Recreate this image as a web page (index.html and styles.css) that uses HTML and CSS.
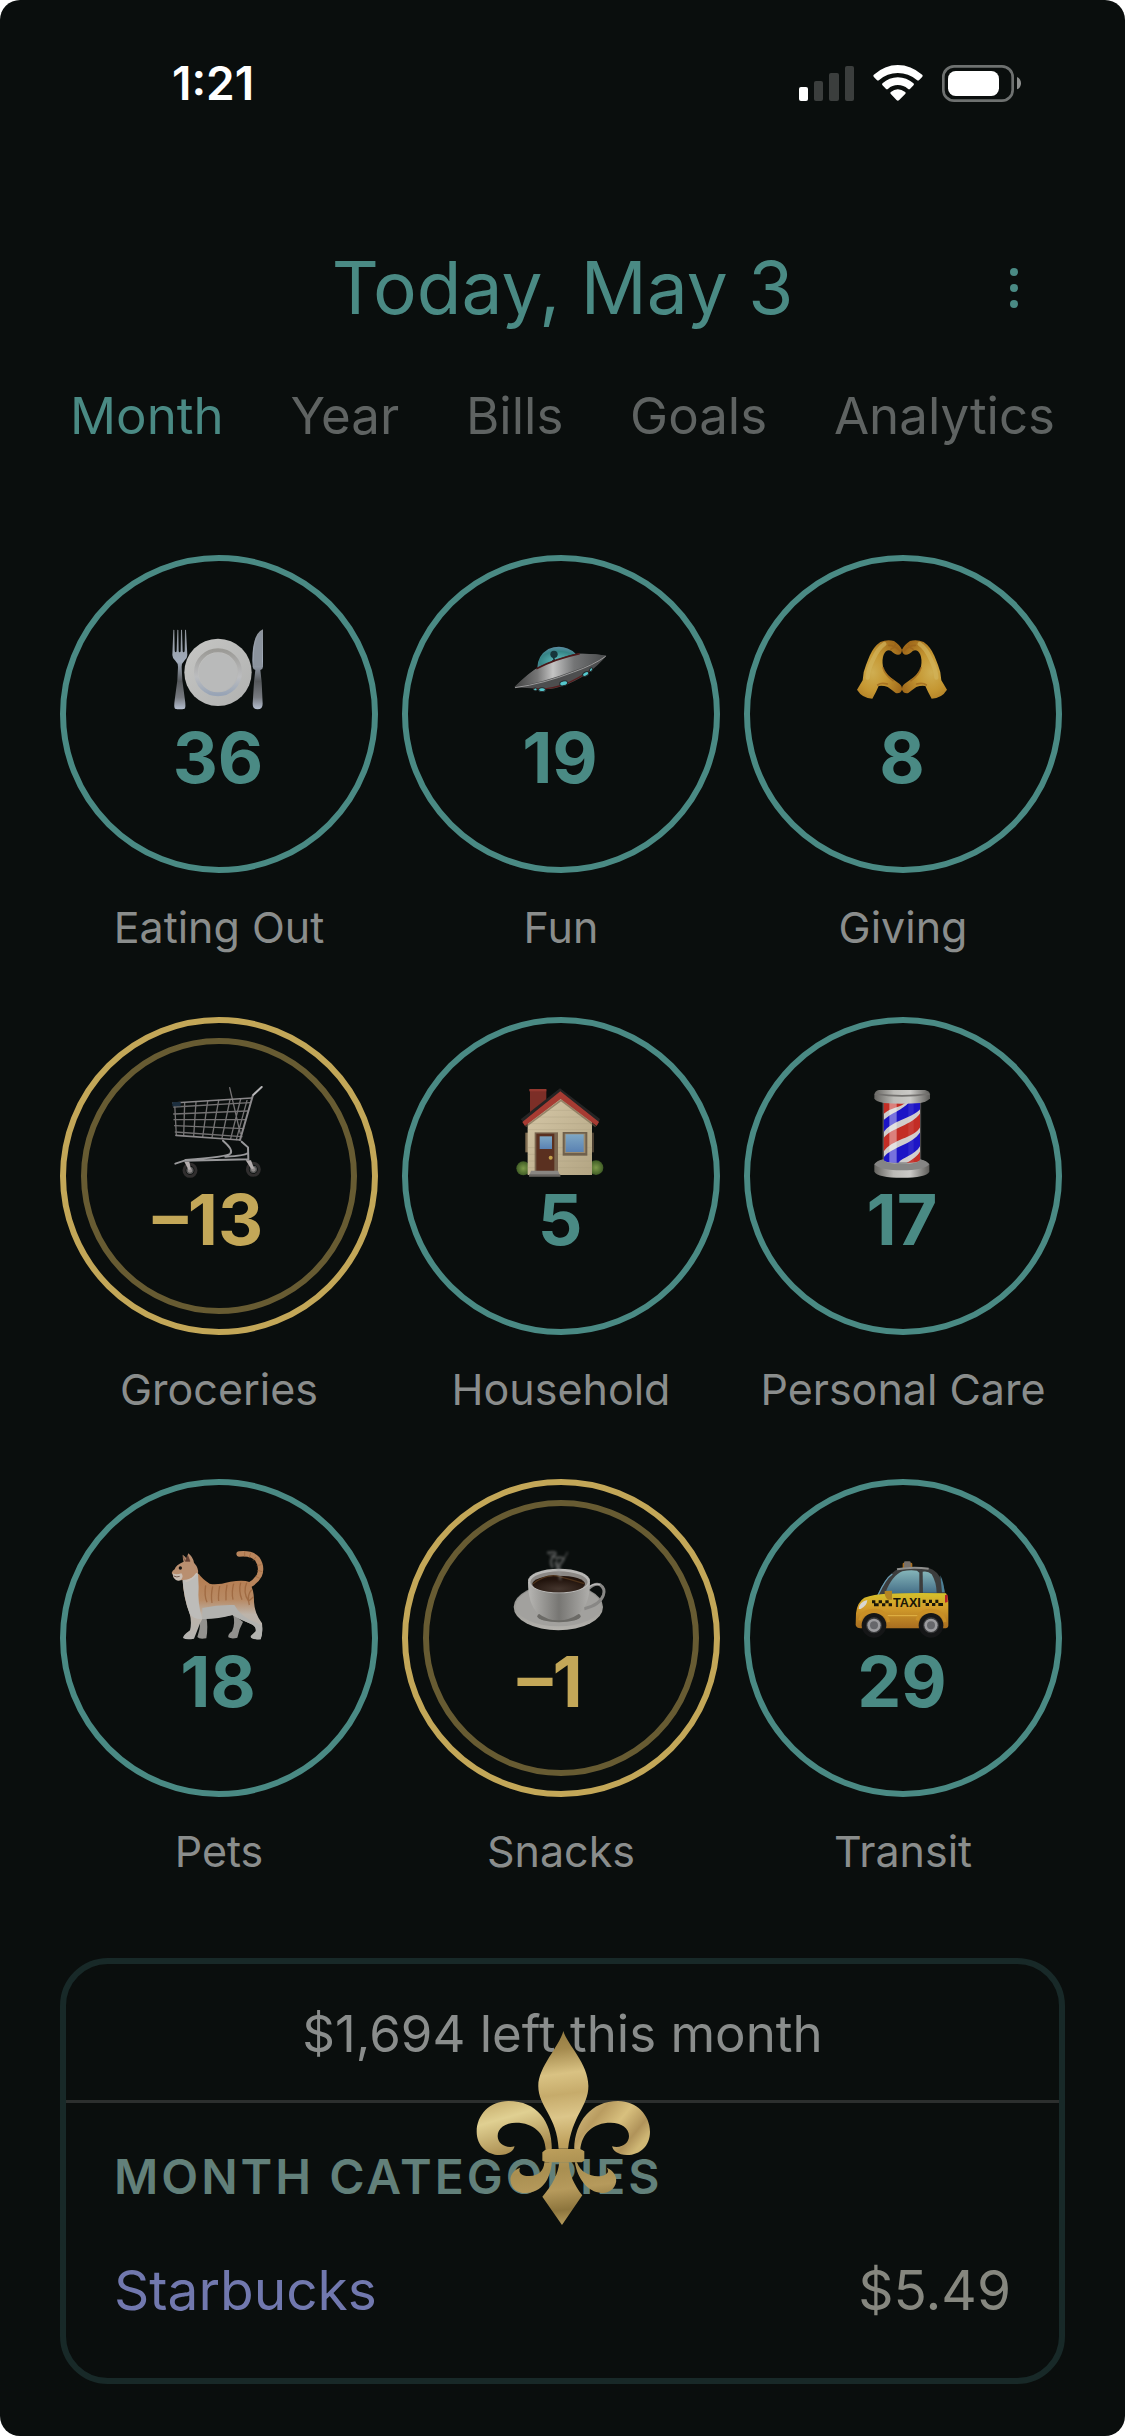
FILE: index.html
```html
<!DOCTYPE html>
<html lang="en">
  <head>
    <meta charset="utf-8" />
    <meta name="viewport" content="width=device-width, initial-scale=1" />
    <title>Budget</title>
    <link rel="stylesheet" href="styles.css">
  </head>
  <body>
    <div class="screen">
      <div class="status-bar">
        <span class="time">1:21</span>
        <div class="status-icons">
          <svg width="55" height="35" viewBox="0 0 55 35">
            <rect x="0" y="21" width="9" height="14" rx="2" fill="#fff" />
            <rect x="15" y="15" width="9" height="20" rx="2" fill="#3b3e3d" />
            <rect x="30" y="7" width="10" height="28" rx="2" fill="#3b3e3d" />
            <rect x="46" y="0" width="9" height="35" rx="2" fill="#3b3e3d" />
          </svg>
          <svg width="50" height="36" viewBox="339 72 149 108" fill="#fff">
            <path d="M341 101Q374 72 413 72T486 101Q489 104 486 108L477 117Q474 120 470 117Q445 96 413 96T357 117Q353 120 350 117L341 108Q338 104 341 101Z" />
            <path d="M367 127Q387 109 413 109T460 127Q463 130 460 133L450 143Q447 146 443 143Q430 132 413 132T384 143Q380 146 377 143L367 133Q364 130 367 127Z" />
            <path d="M392 153Q402 145 413 145T435 153Q438 156 435 159L417 177Q413 181 409 177L392 159Q389 156 392 153Z" />
          </svg>
          <svg width="79" height="37" viewBox="546 72 237 111">
            <rect x="550" y="76" width="208" height="103" rx="32" fill="none" stroke="#6e7170" stroke-width="8" />
            <rect x="564" y="90" width="153" height="75" rx="23" fill="#fff" />
            <path d="M771 108Q783 113 783 127T771 145Z" fill="#8c8e8d" />
          </svg>
        </div>
      </div>

      <header class="header">
        <h1>Today, May 3</h1>
        <button class="menu" aria-label="Menu">
          <svg width="12" height="44" viewBox="0 0 12 44">
            <circle cx="6" cy="6" r="4" />
            <circle cx="6" cy="22" r="4" />
            <circle cx="6" cy="38" r="4" />
          </svg>
        </button>
      </header>

      <nav class="tabs">
        <a href="#month" class="active">Month</a>
        <a href="#year">Year</a>
        <a href="#bills">Bills</a>
        <a href="#goals">Goals</a>
        <a href="#analytics">Analytics</a>
      </nav>

      <main>
        <div class="grid">
          <div class="category">
            <div class="ring">
              <svg class="icon" viewBox="359 245 288 288">
                <defs>
                  <linearGradient id="steel" x1="0" y1="0" x2="0" y2="1">
                    <stop offset="0" stop-color="#8d9299" />
                    <stop offset=".4" stop-color="#a2acbb" />
                    <stop offset=".65" stop-color="#55585b" />
                    <stop offset=".85" stop-color="#777a80" />
                    <stop offset="1" stop-color="#b5bfd0" />
                  </linearGradient>
                  <linearGradient id="plate" x1="0" y1="0" x2="1" y2="1">
                    <stop offset="0" stop-color="#c6c6c4" />
                    <stop offset="1" stop-color="#b0b1b0" />
                  </linearGradient>
                  <linearGradient id="rim" x1="0" y1="0" x2="0" y2="1">
                    <stop offset="0" stop-color="#9b9a96" />
                    <stop offset=".6" stop-color="#bcbdbf" />
                    <stop offset="1" stop-color="#98a4b6" />
                  </linearGradient>
                </defs>
                <path d="M369 269Q371 267 372 269L373 330Q373 336 376 336T379 330L381 269Q383 267 384 269L385 331Q385 336 388 336T391 331L392 269Q394 267 395 269L397 331Q397 336 400 336T403 330L404 269Q406 267 407 269L411 344Q411 354 402 361Q394 368 394 380L396 420L404 480Q407 500 403 505Q388 509 374 505Q370 500 373 480L381 420L383 380Q383 368 375 361Q366 354 366 344Z" fill="url(#steel)" />
                <circle cx="503" cy="396" r="101" fill="url(#plate)" />
                <circle cx="503" cy="396" r="66" fill="none" stroke="url(#rim)" stroke-width="12" />
                <circle cx="503" cy="396" r="58" fill="#b9baba" />
                <path d="M638 267Q606 280 606 360L607 380Q608 387 615 389L611 425L607 490Q607 507 622 507T637 490L634 425L630 389Q638 386 638 379Z" fill="url(#steel)" />
                <path d="M635 272Q609 290 609 378L635 378Z" fill="#8b939d" />
              </svg>
              <span class="amount">36</span>
            </div>
            <span class="label">Eating Out</span>
          </div>

          <div class="category">
            <div class="ring">
              <svg class="icon" viewBox="335 245 288 288">
                <defs>
                  <linearGradient id="hull" x1="0" y1="0" x2="1" y2="0">
                    <stop offset="0" stop-color="#3f4040" />
                    <stop offset=".25" stop-color="#777" />
                    <stop offset=".42" stop-color="#c4c4c4" />
                    <stop offset=".65" stop-color="#747576" />
                    <stop offset="1" stop-color="#47494a" />
                  </linearGradient>
                  <radialGradient id="dome" cx=".55" cy=".7" r=".8">
                    <stop offset="0" stop-color="#63c3c4" />
                    <stop offset=".6" stop-color="#368486" />
                    <stop offset="1" stop-color="#6c91b0" />
                  </radialGradient>
                </defs>
                <path d="M342 441Q390 396 410 384Q470 352 534 340Q585 339 618 346Q598 372 555 404Q480 450 430 446Z" fill="#4d4e4f" />
                <path d="M342 440Q390 394 410 384Q470 352 534 340Q585 339 618 346Q580 371 520 391Q430 426 342 440Z" fill="url(#hull)" />
                <path d="M344 442Q430 430 520 395Q580 374 616 348" fill="none" stroke="#9a9a9a" stroke-width="3" />
                <path d="M411 382Q412 345 444 326Q490 308 526 340Q465 356 411 382Z" fill="url(#dome)" />
                <circle cx="461" cy="342" r="11" fill="#17353b" />
                <path d="M459 350L462 360L456 362" stroke="#17353b" stroke-width="5" fill="none" />
                <path d="M408 385Q470 354 538 340" fill="none" stroke="#4c1718" stroke-width="5" />
                <path d="M398 444Q480 455 575 386" fill="none" stroke="#5a1d1e" stroke-width="4" />
                <g fill="#55c8cd" stroke="#232a2c" stroke-width="3">
                  <ellipse cx="425" cy="448" rx="10" ry="6" />
                  <ellipse cx="405" cy="447" rx="5" ry="4" />
                  <ellipse cx="490" cy="429" rx="12" ry="7" transform="rotate(-14 490 429)" />
                  <ellipse cx="556" cy="401" rx="10" ry="6" transform="rotate(-28 556 401)" />
                  <ellipse cx="572" cy="388" rx="4" ry="6" transform="rotate(30 572 388)" />
                </g>
              </svg>
              <span class="amount">19</span>
            </div>
            <span class="label">Fun</span>
          </div>

          <div class="category">
            <div class="ring">
              <svg class="icon" viewBox="341 245 288 288">
                <defs>
                  <radialGradient id="skin" cx=".35" cy=".55" r=".7">
                    <stop offset="0" stop-color="#cfae52" />
                    <stop offset=".45" stop-color="#c59732" />
                    <stop offset="1" stop-color="#a0691a" />
                  </radialGradient>
                  <g id="hand">
                    <path d="M350 448L367 420Q368 394 377 374Q383 358 388 346Q400 319 420 305Q440 297 461 302Q478 313 485 328Q484 343 473 343Q464 343 452 331Q438 326 430 343Q424 358 428 379Q434 397 450 411L477 430Q486 436 485 448Q480 461 466 458Q455 449 442 440Q428 435 415 437Q407 456 396 475Q366 474 350 448Z" fill="url(#skin)" />
                    <path d="M382 412Q384 384 399 356Q413 324 432 311" fill="none" stroke="#d2b45b" stroke-width="13" stroke-linecap="round" opacity=".7" />
                    <path d="M428 382Q434 403 458 421M412 434Q422 426 441 431M445 315Q464 315 478 331M452 327Q462 323 465 313" fill="none" stroke="#99611a" stroke-width="5" stroke-linecap="round" opacity=".65" />
                  </g>
                </defs>
                <use href="#hand" />
                <use href="#hand" transform="translate(970 0) scale(-1 1)" />
              </svg>
              <span class="amount">8</span>
            </div>
            <span class="label">Giving</span>
          </div>

          <div class="category">
            <div class="ring over">
              <svg class="icon" viewBox="359 251 288 288" fill="none" stroke-linecap="round">
                <g stroke="#747273" stroke-width="4">
                  <path d="M370 320L600 307M370 341L592 332M371 358L587 358M373 376L580 385M375 395L575 409" />
                  <path d="M373 310L378 405M403 307L400 406M437 305L430 408M472 303L457 410M505 300L485 412M538 262L570 400M539 298L515 413M571 296L541 415M590 300L558 418" />
                </g>
                <path d="M368 308L604 293M377 405L569 419" stroke="#8a888a" stroke-width="5" />
                <path d="M634 260L608 284L569 419" stroke="#8c8a8c" stroke-width="6" />
                <path d="M634 260L609 284" stroke="#b9b9bb" stroke-width="5" />
                <rect x="366" y="305" width="25" height="13" fill="#1c2e3e" />
                <path d="M518 421Q550 448 540 460Q530 470 405 479M574 424L593 441L594 477L402 481L375 490M592 458Q586 466 525 469" stroke="#99999b" stroke-width="6" />
                <circle cx="419" cy="510" r="18" stroke="#302e2e" stroke-width="9" />
                <circle cx="419" cy="510" r="9" fill="#8d8988" stroke="#555" stroke-width="4" />
                <circle cx="609" cy="507" r="18" stroke="#302e2e" stroke-width="9" />
                <circle cx="609" cy="507" r="9" fill="#8d8988" stroke="#555" stroke-width="4" />
                <path d="M402 484L417 484L422 507Q415 511 413 505ZM586 480L602 480L611 504Q604 509 601 503Z" fill="#b3adad" />
              </svg>
              <span class="amount">–13</span>
            </div>
            <span class="label">Groceries</span>
          </div>

          <div class="category">
            <div class="ring">
              <svg class="icon" viewBox="335 251 288 288">
                <defs>
                  <linearGradient id="wall" x1="0" y1="0" x2="1" y2="1">
                    <stop offset="0" stop-color="#d6c8a8" />
                    <stop offset="1" stop-color="#b3a583" />
                  </linearGradient>
                  <linearGradient id="glass" x1="0" y1="0" x2="0" y2="1">
                    <stop offset="0" stop-color="#7ea7c4" />
                    <stop offset="1" stop-color="#5a82b3" />
                  </linearGradient>
                  <radialGradient id="bush">
                    <stop offset="0" stop-color="#7d9a4a" />
                    <stop offset="1" stop-color="#3f5c25" />
                  </radialGradient>
                </defs>
                <rect x="389" y="267" width="49" height="80" fill="#7c2e27" />
                <rect x="387" y="266" width="51" height="7" fill="#93382f" />
                <circle cx="369" cy="504" r="21" fill="url(#bush)" />
                <circle cx="587" cy="502" r="22" fill="url(#bush)" />
                <rect x="375" y="397" width="9" height="59" fill="#806d51" />
                <rect x="572" y="397" width="9" height="59" fill="#4b3f31" />
                <path d="M382 524V362L480 289L575 362V524Z" fill="url(#wall)" />
                <path d="M400 350H560M382 370H575M382 388H575M382 442H575M382 462H575M382 482H575M382 502H575M430 330H530" stroke="#a89b7c" stroke-width="2" opacity=".5" />
                <path d="M361 357L479 264L599 356L592 372L480 289L372 368Z" fill="#252424" />
                <path d="M366 365L480 273L596 365L589 377L481 296L374 377Z" fill="#a63b32" />
                <path d="M376 379L482 300L586 379" fill="none" stroke="#6f5b45" stroke-width="5" opacity=".6" />
                <rect x="403" y="396" width="70" height="116" fill="#7a6650" />
                <rect x="408" y="400" width="54" height="112" fill="#5a3020" />
                <rect x="418" y="408" width="37" height="38" fill="url(#glass)" />
                <circle cx="451" cy="472" r="6" fill="#c3a04a" />
                <rect x="487" y="395" width="74" height="71" fill="#6f604c" />
                <rect x="493" y="400" width="62" height="58" fill="#9b8b6f" />
                <rect x="496" y="402" width="54" height="53" fill="url(#glass)" />
                <path d="M392 511H473L480 528H386Z" fill="#898682" />
                <path d="M386 522H480V529H386Z" fill="#66635f" />
              </svg>
              <span class="amount">5</span>
            </div>
            <span class="label">Household</span>
          </div>

          <div class="category">
            <div class="ring">
              <svg class="icon" viewBox="341 251 288 288">
                <defs>
                  <linearGradient id="cap" x1="0" y1="0" x2="1" y2="0">
                    <stop offset="0" stop-color="#64635f" />
                    <stop offset=".35" stop-color="#bcbbb7" />
                    <stop offset=".65" stop-color="#cbcac7" />
                    <stop offset="1" stop-color="#5d5c59" />
                  </linearGradient>
                  <clipPath id="tube"><path d="M429 305H540V487H429Z" /></clipPath>
                </defs>
                <g clip-path="url(#tube)">
                  <rect x="429" y="300" width="111" height="190" fill="#d0cdcc" />
                  <path d="M429 270V342C450 320 485 322 497 305Z" fill="#c32d25" />
                  <path d="M429 360C455 335 490 330 510 300H545V320C520 356 450 360 429 398Z" fill="#1d15c6" />
                  <path d="M429 414C455 380 515 376 540 338V380C520 415 455 415 429 455Z" fill="#c32d25" />
                  <path d="M429 472C455 438 515 435 540 395V436C520 470 480 468 470 495H429Z" fill="#1d15c6" />
                  <path d="M495 490C515 478 530 470 540 452V490Z" fill="#c32d25" />
                  <rect x="447" y="305" width="22" height="185" fill="#fff" opacity=".4" />
                  <rect x="504" y="305" width="16" height="185" fill="#fff" opacity=".08" />
                </g>
                <path d="M428 305V487M541 305V487" stroke="#504e4c" stroke-width="3" />
                <path d="M416 269H554Q568 272 569 282V294Q560 305 540 308Q485 313 430 308Q404 303 402 294V282Q404 271 416 269Z" fill="url(#cap)" />
                <path d="M404 281Q485 292 567 281" fill="none" stroke="#73716f" stroke-width="5" />
                <path d="M429 477Q432 489 485 489T540 477Q560 482 567 492V514Q557 532 485 532T402 514V492Q410 480 429 477Z" fill="url(#cap)" />
                <path d="M402 492Q420 510 485 510T567 492Q560 482 540 478Q535 490 485 490T429 478Q410 481 402 492Z" fill="#858584" />
              </svg>
              <span class="amount">17</span>
            </div>
            <span class="label">Personal Care</span>
          </div>

          <div class="category">
            <div class="ring">
              <svg class="icon" viewBox="359 227 288 288">
                <defs>
                  <linearGradient id="fur" x1="0" y1="0" x2="0" y2="1">
                    <stop offset="0" stop-color="#b57c4f" />
                    <stop offset=".4" stop-color="#b88a64" />
                    <stop offset=".62" stop-color="#bdb4aa" />
                    <stop offset="1" stop-color="#b4b3b0" />
                  </linearGradient>
                </defs>
                <path d="M441 425Q452 455 447 478L441 500Q447 508 468 504Q474 470 468 440ZM548 430Q556 460 545 483Q532 492 534 501Q545 507 561 502Q566 475 578 455Z" fill="#92918e" />
                <path d="M566 251Q605 247 621 266Q637 290 627 315Q618 333 597 344" fill="none" stroke="#b9855c" stroke-width="16" stroke-linecap="round" />
                <path d="M583 244V259M601 248L596 263M617 260L608 271M633 283L619 286M636 304L621 300M628 324L614 317" stroke="#9b6338" stroke-width="3" opacity=".6" />
                <path d="M397 330Q400 385 418 430Q425 455 419 480Q398 495 398 503Q408 510 431 505L444 472Q450 455 456 446Q505 442 546 434Q575 450 600 460Q620 468 616 483L601 497Q600 507 631 507Q638 487 635 459Q613 430 611 395Q612 360 597 335Q580 328 540 334Q500 345 478 340Q455 325 445 310Z" fill="url(#fur)" />
                <path d="M396 322Q400 385 418 430Q430 448 456 446Q441 400 445 350L443 305Z" fill="#bdbcb9" />
                <path d="M456 413Q505 402 552 404Q570 435 600 450Q630 462 635 468Q638 487 631 507Q606 509 601 500L616 485Q620 465 596 458Q566 447 546 434Q502 447 456 446Z" fill="#b2b2af" />
                <path d="M466 345Q461 375 470 396M487 348Q481 375 485 398M508 347Q503 376 505 392M530 343Q525 366 527 390M550 340Q543 366 548 388M571 337Q564 362 575 388M589 337Q577 365 594 391M604 358Q588 374 597 404M609 380L596 391" fill="none" stroke="#935c34" stroke-width="4" opacity=".65" />
                <path d="M397 253Q406 259 408 265L414 249Q428 260 431 277Q446 294 443 309Q424 330 396 329Q379 333 369 320Q367 310 364 308Q366 300 373 297Q376 284 400 274Q397 265 397 253Z" fill="#b98f70" />
                <path d="M367 309Q378 315 393 309Q402 320 390 330Q377 334 369 320Z" fill="#c9bdb3" />
                <path d="M412 255L419 273L405 273ZM399 258L403 271" fill="#654133" stroke="#654133" stroke-width="2" />
                <circle cx="390" cy="293" r="5" fill="#171311" />
                <path d="M370 317Q380 322 388 318" fill="none" stroke="#71594d" stroke-width="3" />
                <path d="M405 333Q425 330 440 309" fill="none" stroke="#c9c1b9" stroke-width="5" />
              </svg>
              <span class="amount">18</span>
            </div>
            <span class="label">Pets</span>
          </div>

          <div class="category">
            <div class="ring over">
              <svg class="icon" viewBox="335 227 288 288">
                <defs>
                  <linearGradient id="cup" x1="0" y1="0" x2="1" y2="0">
                    <stop offset="0" stop-color="#b7b6b3" />
                    <stop offset=".5" stop-color="#777673" />
                    <stop offset="1" stop-color="#b0afac" />
                  </linearGradient>
                  <linearGradient id="saucer" x1="0" y1="0" x2="0" y2="1">
                    <stop offset="0" stop-color="#858582" />
                    <stop offset="1" stop-color="#b4b2ad" />
                  </linearGradient>
                  <radialGradient id="coffee" cx=".5" cy=".8" r=".6">
                    <stop offset="0" stop-color="#44352d" />
                    <stop offset="1" stop-color="#21130c" />
                  </radialGradient>
                  <filter id="steam" x="-50%" y="-50%" width="200%" height="200%">
                    <feGaussianBlur stdDeviation="3" />
                  </filter>
                </defs>
                <ellipse cx="474" cy="410" rx="134" ry="70" fill="url(#saucer)" />
                <ellipse cx="474" cy="406" rx="128" ry="62" fill="#a2a19e" />
                <ellipse cx="476" cy="438" rx="65" ry="18" fill="#6b6a66" />
                <path d="M565 355Q582 337 599 343Q616 354 609 375Q598 405 552 415" fill="none" stroke="#888785" stroke-width="9" />
                <path d="M565 350Q582 338 599 343" fill="none" stroke="#bbb" stroke-width="4" />
                <path d="M383 334Q383 400 412 428Q442 451 475 450T536 430Q569 400 569 334Z" fill="url(#cup)" />
                <ellipse cx="476" cy="332" rx="93" ry="37" fill="#b9b8b6" />
                <ellipse cx="476" cy="335" rx="86" ry="32" fill="#8b8885" />
                <ellipse cx="475" cy="341" rx="79" ry="25" fill="url(#coffee)" />
                <path d="M398 340Q440 309 475 318T552 340" fill="none" stroke="#4d321a" stroke-width="4" />
                <g fill="none" stroke="#999" stroke-linecap="round" filter="url(#steam)">
                  <path d="M444 247Q475 241 461 257Q445 270 456 289M471 262Q500 258 482 278Q472 286 480 325M466 278L475 303" stroke-width="9" opacity=".4" />
                  <path d="M450 255Q473 255 473 293M501 247L491 265" stroke-width="7" opacity=".25" />
                </g>
              </svg>
              <span class="amount">–1</span>
            </div>
            <span class="label">Snacks</span>
          </div>

          <div class="category">
            <div class="ring">
              <svg class="icon" viewBox="341 227 288 288">
                <defs>
                  <linearGradient id="paint" x1="0" y1="0" x2="0" y2="1">
                    <stop offset="0" stop-color="#d5c22b" />
                    <stop offset=".4" stop-color="#d49e2a" />
                    <stop offset="1" stop-color="#a86d20" />
                  </linearGradient>
                  <linearGradient id="pane" x1="0" y1="0" x2="0" y2="1">
                    <stop offset="0" stop-color="#85b5b9" />
                    <stop offset="1" stop-color="#456f88" />
                  </linearGradient>
                  <g id="wheel">
                    <circle r="37" fill="#151617" />
                    <circle r="24" fill="#38393a" />
                    <circle r="20" fill="#9c9c9f" />
                    <circle r="12" fill="#66676b" />
                  </g>
                </defs>
                <rect x="487" y="277" width="29" height="18" rx="4" fill="#a86e1f" />
                <rect x="491" y="273" width="20" height="20" rx="4" fill="#77706a" />
                <path d="M410 376Q440 310 475 295Q515 288 565 293Q592 300 606 335L617 376Z" fill="#3c3d3d" />
                <path d="M470 297Q515 288 565 295" fill="none" stroke="#8e8e8c" stroke-width="6" />
                <path d="M413 375Q435 325 456 311" fill="none" stroke="#6a9eb5" stroke-width="4" />
                <path d="M434 370Q455 315 486 303Q510 297 530 301L537 307V370Z" fill="url(#pane)" />
                <path d="M547 304Q563 301 574 312Q588 335 589 367H548Z" fill="url(#pane)" />
                <path d="M600 315Q610 335 613 366L605 366Z" fill="#4c7f96" />
                <path d="M347 429Q350 396 372 382Q400 372 440 370Q530 366 617 369Q625 382 624 404V466Q623 474 612 474H360Q349 474 346 464Z" fill="url(#paint)" />
                <path d="M440 436H540" stroke="#e2b546" stroke-width="3" />
                <path d="M355 416Q356 395 381 389Q380 406 361 416Z" fill="#d9d7d1" />
                <path d="M433 362L455 361V388H443Q432 382 433 362Z" fill="#b28422" />
                <path d="M614 374L622 373V395L614 397Z" fill="#b5202b" />
                <g fill="#1b1608">
                  <path d="M395 390h10v9h-10zM415 390h10v9h-10zM435 390h10v9h-10zM405 399h10v9h-10zM425 399h10v9h-10zM445 399h10v9h-10zM401 399h4v9h-4z" />
                  <path d="M547 388h9v10h-9zM566 388h9v10h-9zM585 388h9v10h-9zM556 398h10v9h-10zM575 398h10v9h-10zM594 398h14v9h-14z" />
                  <text x="458" y="410" class="taxi-sign">TAXI</text>
                </g>
                <path d="M358 450Q367 420 402 420T445 455M530 450Q538 420 572 420T614 455" fill="none" stroke="#c98f25" stroke-width="9" />
                <use href="#wheel" x="401" y="465" />
                <use href="#wheel" x="572" y="465" />
              </svg>
              <span class="amount">29</span>
            </div>
            <span class="label">Transit</span>
          </div>
        </div>

        <section class="card">
          <p class="remaining">$1,694 left this month</p>
          <div class="card-body">
            <h2>Month Categories</h2>
            <div class="transaction">
              <a href="#starbucks">Starbucks</a>
              <span>$5.49</span>
            </div>
          </div>
        </section>
      </main>

      <button class="add" aria-label="Add transaction">
        <svg width="174" height="194" viewBox="645 303 257 582" preserveAspectRatio="none">
          <defs>
            <linearGradient id="gold" gradientUnits="userSpaceOnUse" x1="690" y1="303" x2="840" y2="885">
              <stop offset="0" stop-color="#8d753d" />
              <stop offset=".12" stop-color="#a48a4e" />
              <stop offset=".24" stop-color="#d9c283" />
              <stop offset=".34" stop-color="#c6ab6b" />
              <stop offset=".45" stop-color="#dcc68a" />
              <stop offset=".58" stop-color="#bfa15d" />
              <stop offset=".7" stop-color="#a98f51" />
              <stop offset=".8" stop-color="#b69a5c" />
              <stop offset=".9" stop-color="#8d753d" />
              <stop offset="1" stop-color="#c4a968" />
            </linearGradient>
            <linearGradient id="gold-left" x1="0" y1="0" x2=".4" y2="1">
              <stop offset="0" stop-color="#c2a766" />
              <stop offset=".4" stop-color="#e0d092" />
              <stop offset="1" stop-color="#aa8d50" />
            </linearGradient>
            <linearGradient id="gold-right" x1="0" y1="0" x2="1" y2=".6">
              <stop offset="0" stop-color="#dcc68a" />
              <stop offset=".35" stop-color="#b99c60" />
              <stop offset=".6" stop-color="#d8c07e" />
              <stop offset=".85" stop-color="#b0935a" />
              <stop offset="1" stop-color="#cfb775" />
            </linearGradient>
          </defs>
          <path d="M774 303C780 345 811 400 811 468C811 530 787 555 781 656H767C765 560 737 530 737 468C737 410 768 350 774 303Z" fill="url(#gold)" />
          <path d="M757 656C757 575 735 513 693 513C665 513 646 555 646 605C646 646 661 675 680 675C693 675 701 662 702 649C688 656 677 640 677 618C677 595 688 578 704 578C730 578 747 610 748 660Z" fill="url(#gold-left)" />
          <path d="M790 656C791 575 815 513 855 513C882 513 902 555 902 605C902 646 888 675 868 675C855 675 847 662 846 649C860 656 871 640 871 618C871 595 860 578 844 578C818 578 801 610 799 660Z" fill="url(#gold-right)" />
          <path d="M747 660Q752 655 758 657H790Q797 654 802 660L805 664V692L801 697H748L743 692V667Z" fill="url(#gold)" />
          <path d="M746 697C745 725 736 739 723 738C712 738 707 728 710 713C699 721 695 739 696 752C697 776 706 789 718 789C742 788 755 750 757 697ZM794 697C800 730 816 742 830 738C840 734 842 724 838 713C849 721 853 742 852 755C850 778 841 789 830 789C810 786 795 747 791 697Z" fill="url(#gold)" />
          <path d="M768 697H782C783 735 790 765 802 796L772 885L743 800C758 765 766 735 768 697Z" fill="url(#gold)" />
        </svg>
      </button>
    </div>
  </body>
</html>
```

FILE: styles.css
```css
:root {
  --bg: #0a0e0d;
  --teal: #4a8a84;
  --gold: #c3a758;
  --muted: #8a8d8c;
}
* {
  box-sizing: border-box;
}
html {
  background: #fff;
}
body {
  margin: 0;
  font-family: Inter, "Open Sans", sans-serif;
  color: var(--muted);
}
h1,
h2,
p {
  margin: 0;
}
a {
  color: inherit;
  text-decoration: none;
}
button {
  padding: 0;
  border: none;
  background: none;
  cursor: pointer;
}
svg {
  display: block;
}
.screen {
  min-height: 100vh;
  background: var(--bg);
  border-radius: 20px;
}
.status-bar {
  display: flex;
  justify-content: space-between;
  align-items: center;
  height: 166px;
  padding: 0 104px 0 172px;
}
.time {
  color: #fff;
  font-size: 46px;
  font-weight: 600;
}
.status-icons {
  display: flex;
  align-items: center;
  gap: 19px;
}
.header {
  display: grid;
  grid-template-columns: 1fr auto 1fr;
  align-items: center;
  padding: 74px 84px 0;
  color: var(--teal);
}
h1 {
  grid-column: 2;
  font-size: 73px;
  font-weight: 400;
  line-height: 96px;
}
.menu {
  justify-self: end;
  padding: 12px 21px;
}
.menu svg {
  fill: var(--teal);
}
.tabs {
  display: flex;
  justify-content: space-between;
  padding: 48px 70px 0;
  color: #5f6362;
  font-size: 51px;
  line-height: 64px;
}
.tabs .active {
  color: var(--teal);
}
.grid {
  display: grid;
  grid-template-columns: repeat(3, 1fr);
  gap: 60px 24px;
  padding: 107px 63px 0 60px;
}
.category {
  display: flex;
  flex-direction: column;
  align-items: center;
  gap: 24px;
}
.ring {
  position: relative;
  display: flex;
  flex-direction: column;
  align-items: center;
  width: 100%;
  aspect-ratio: 1;
  padding: 61px 2px 0 0;
  border: 6px solid var(--teal);
  border-radius: 50%;
  color: var(--teal);
}
.ring.over {
  border-color: var(--gold);
  color: var(--gold);
}
.ring.over::after {
  content: "";
  position: absolute;
  inset: 15px;
  border: 6px solid var(--gold);
  border-radius: 50%;
  opacity: 0.5;
}
.icon {
  width: 96px;
  height: 96px;
}
.taxi-sign {
  font-family: "Liberation Sans", sans-serif;
  font-size: 38px;
  font-weight: 700;
}
.amount {
  font-size: 70px;
  font-weight: 700;
  line-height: 80px;
}
.over .amount {
  padding-right: 20px;
}
.label {
  font-size: 43px;
  line-height: 60px;
}
.card {
  margin: 77px 60px 0;
  border: 6px solid #182928;
  border-radius: 48px;
}
.remaining {
  padding: 40px 48px 36px;
  border-bottom: 3px solid #2c2f2e;
  font-size: 51px;
  line-height: 60px;
  text-align: center;
}
.card-body {
  padding: 44px 48px 52px;
}
h2 {
  color: #62807a;
  font-size: 48px;
  font-weight: 600;
  letter-spacing: 3px;
  line-height: 60px;
  text-transform: uppercase;
}
.transaction {
  display: flex;
  justify-content: space-between;
  margin-top: 47px;
  color: #86877f;
  font-size: 55px;
  line-height: 72px;
}
.transaction a {
  color: #7178ae;
}
.add {
  position: fixed;
  bottom: 211px;
  left: 50%;
  transform: translateX(-50%);
}
```
